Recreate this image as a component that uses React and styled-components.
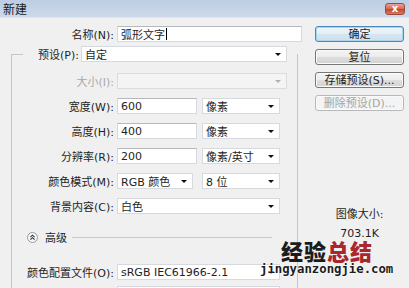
import styled, { createGlobalStyle } from "styled-components";

const GlobalStyle = createGlobalStyle`
  html, body {
    margin: 0;
    padding: 0;
    background: #f0f0f0;
  }
  body {
    font-family: "DejaVu Sans", "Noto Sans CJK SC", sans-serif;
    font-size: 11px;
    color: #1e1e1e;
  }
`;

const App = () => {
  return (
    <Window>
      <GlobalStyle />
      <TitleBar>
        <Title>新建</Title>
        <CloseButton>x</CloseButton>
      </TitleBar>
      <Body>
        <LeftPane>
          <Row>
            <Label $w={114}>名称(N):</Label>
            <Input $w={185}>
              弧形文字<Caret />
            </Input>
          </Row>
          <Group>
            <Legend>
              <Label $w={44} $gap={2}>预设(P):</Label>
              <Select $w={206}>自定</Select>
            </Legend>
            <Rows>
              <Row>
                <Label $w={102} $disabled>大小(I):</Label>
                <Select $w={170} $disabled />
              </Row>
              <Row>
                <Label $w={102}>宽度(W):</Label>
                <Input $w={80}>600</Input>
                <Select $w={78}>像素</Select>
              </Row>
              <Row>
                <Label $w={102}>高度(H):</Label>
                <Input $w={80}>400</Input>
                <Select $w={78}>像素</Select>
              </Row>
              <Row>
                <Label $w={102}>分辨率(R):</Label>
                <Input $w={80}>200</Input>
                <Select $w={78}>像素/英寸</Select>
              </Row>
              <Row>
                <Label $w={102}>颜色模式(M):</Label>
                <Select $w={76} $gap={9}>RGB 颜色</Select>
                <Select $w={78}>8 位</Select>
              </Row>
              <Row>
                <Label $w={102}>背景内容(C):</Label>
                <Select $w={163}>白色</Select>
              </Row>
              <Advanced>
                <svg width="11" height="11" viewBox="0 0 11 11">
                  <circle cx="5.5" cy="5.5" r="5" fill="#f7f7f7" stroke="#9a9a9a" />
                  <path d="M3.4 5.2 L5.5 3.2 L7.6 5.2 M3.4 7.7 L5.5 5.7 L7.6 7.7" fill="none" stroke="#333" strokeWidth="1.1" />
                </svg>
                <AdvancedText>高级</AdvancedText>
                <Rule />
              </Advanced>
              <Row $top={11}>
                <Label $w={102}>颜色配置文件(O):</Label>
                <Select $w={163}>sRGB IEC61966-2.1</Select>
              </Row>
              <Row $top={-3}>
                <Label $w={102} />
                <Select $w={163} />
              </Row>
            </Rows>
          </Group>
        </LeftPane>
        <RightPane>
          <Button $primary>确定</Button>
          <Button>复位</Button>
          <Button>存储预设(S)...</Button>
          <Button disabled>删除预设(D)...</Button>
          <SizeInfo>
            <div>图像大小:</div>
            <SizeValue>703.1K</SizeValue>
          </SizeInfo>
        </RightPane>
      </Body>
      <Watermark>
        <WaterTitle>
          经验<Red>总结</Red>
        </WaterTitle>
        <WaterUrl>jingyanzongjie.com</WaterUrl>
      </Watermark>
    </Window>
  );
};

const Window = styled.div`
  position: relative;
  width: 409px;
  height: 288px;
  overflow: hidden;
  background: #f0f0f0;
`;

const TitleBar = styled.div`
  height: 17px;
  display: flex;
  align-items: center;
  justify-content: space-between;
  padding: 0 4px 0 3px;
  background: linear-gradient(#bdcee3, #cbd9ea);
  border-bottom: 1px solid #dde6f0;
`;

const Title = styled.div`
  font-size: 12px;
  color: #1a1a1a;
`;

const CloseButton = styled.div`
  width: 20px;
  height: 12px;
  box-sizing: border-box;
  margin-top: 1px;
  border: 1px solid #9a4a3e;
  border-radius: 3px;
  background: linear-gradient(#e9a597, #d2644f 50%, #c2432e 51%, #d67a62);
  color: #fff;
  font-size: 10px;
  font-weight: bold;
  line-height: 9px;
  text-align: center;
`;

const Body = styled.div`
  display: flex;
  padding-top: 8px;
`;

const LeftPane = styled.div`
  width: 305px;
  flex: none;
`;

const RightPane = styled.div`
  width: 89px;
  margin-left: 10px;
  display: flex;
  flex-direction: column;
  gap: 7px;
`;

const Row = styled.div`
  display: flex;
  align-items: center;
  height: 16px;
  margin-top: ${(p) => p.$top || 0}px;
`;

const Label = styled.div`
  flex: none;
  width: ${(p) => p.$w}px;
  margin-right: ${(p) => p.$gap ?? 3}px;
  text-align: right;
  white-space: nowrap;
  color: ${(p) => (p.$disabled ? "#a8a8a8" : "#1e1e1e")};
`;

const Input = styled.div`
  flex: none;
  width: ${(p) => p.$w}px;
  height: 16px;
  box-sizing: border-box;
  display: flex;
  align-items: center;
  padding: 0 3px;
  margin-right: 5px;
  background: #fff;
  border: 1px solid #d6d9dd;
  border-top-color: #b5b8bd;
  white-space: nowrap;
`;

const Caret = styled.span`
  width: 1px;
  height: 12px;
  margin-left: 1px;
  background: #000;
`;

const Select = styled(Input).attrs({ as: "div" })`
  width: ${(p) => p.$w}px;
  margin-right: ${(p) => p.$gap ?? 5}px;
  background: ${(p) => (p.$disabled ? "#f4f4f4" : "#fff")};
  border-color: ${(p) => (p.$disabled ? "#dcdcdc" : "#d6d9dd")};
  &::after {
    content: "";
    margin-left: auto;
    margin-right: 2px;
    border-left: 3px solid transparent;
    border-right: 3px solid transparent;
    border-top: 3px solid ${(p) => (p.$disabled ? "#b0b0b0" : "#111")};
  }
`;

const Group = styled.fieldset`
  margin: 4px 0 0 11px;
  width: 287px;
  box-sizing: border-box;
  padding: 0;
  min-inline-size: auto;
  border: 1px solid #c6c6c6;
  border-bottom: none;
  height: 300px;
`;

const Legend = styled.legend`
  display: flex;
  align-items: center;
  height: 16px;
  margin-left: 11px;
  padding: 0 5px 0 12px;
`;

const Rows = styled.div`
  display: flex;
  flex-direction: column;
  gap: 9px;
  padding-top: 11px;
`;

const Advanced = styled.div`
  display: flex;
  align-items: center;
  height: 14px;
  margin-top: 7px;
  padding-left: 15px;
  margin-right: 25px;
`;

const AdvancedText = styled.span`
  margin-left: 7px;
  font-size: 11px;
`;

const Rule = styled.div`
  flex: 1;
  height: 1px;
  margin-left: 5px;
  background: #c8c8c8;
`;

const Button = styled.button`
  width: 89px;
  height: 16px;
  padding: 0;
  box-sizing: border-box;
  font: inherit;
  font-size: 11px;
  line-height: 13px;
  color: ${(p) => (p.disabled ? "#a5a5a5" : "#1e1e1e")};
  border: 1px solid ${(p) => (p.$primary ? "#4b8ab9" : p.disabled ? "#b6b9bc" : "#777")};
  border-radius: 3px;
  background: ${(p) =>
    p.disabled
      ? "#f4f4f4"
      : p.$primary
      ? "linear-gradient(#eef5fa, #e3eef6 50%, #d6e5f0 51%, #cfdfeb)"
      : "linear-gradient(#f4f4f4, #ececec 50%, #dedede 51%, #d2d2d2)"};
  box-shadow: ${(p) => (p.$primary ? "inset 0 0 0 1px #a9d4ef" : "inset 0 0 0 1px #fafafa")};
`;

const SizeInfo = styled.div`
  margin-top: 90px;
  text-align: center;
  line-height: 14px;
`;

const SizeValue = styled.div`
  margin-top: 5px;
`;

const Watermark = styled.div`
  position: absolute;
  left: 260px;
  top: 239px;
  width: 134px;
  display: flex;
  flex-direction: column;
`;

const WaterTitle = styled.div`
  margin-left: 21px;
  font-family: "Noto Sans CJK SC", sans-serif;
  font-size: 22px;
  font-weight: 900;
  line-height: 22px;
  letter-spacing: 1px;
  color: #1c1c1c;
`;

const Red = styled.span`
  color: #a8262c;
`;

const WaterUrl = styled.div`
  margin-top: 1px;
  font-family: "DejaVu Sans Mono", monospace;
  font-size: 12.3px;
  font-weight: bold;
  line-height: 14px;
  color: #1c1c1c;
  text-shadow: 0 0 2px #fff, 0 0 2px #fff;
`;

export default App;
